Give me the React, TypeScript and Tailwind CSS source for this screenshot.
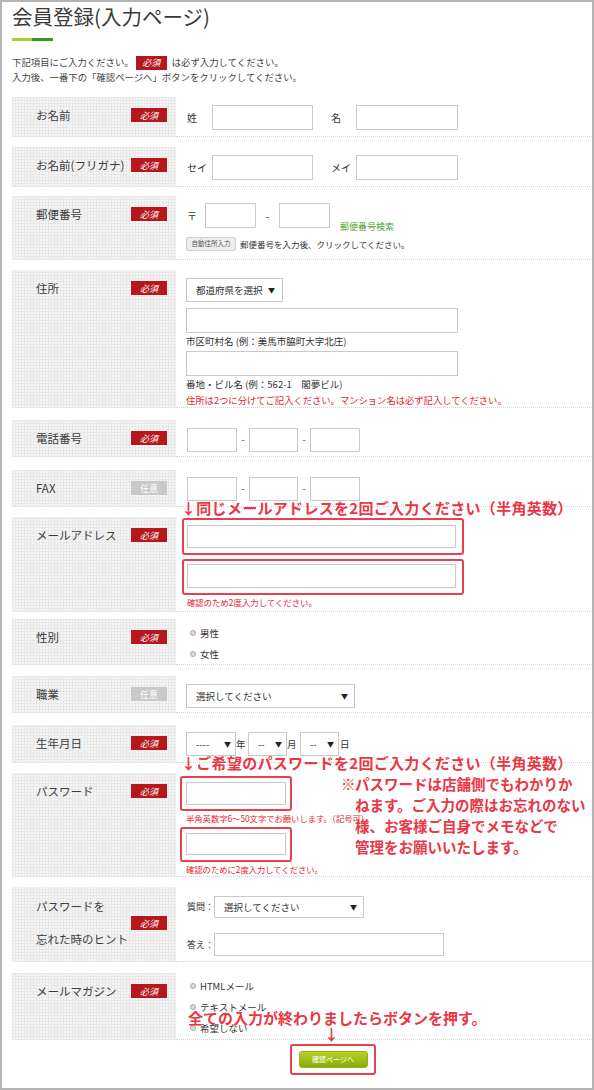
import React from "react";

const LABEL_BG =
  "bg-[#f6f6f6] bg-[image:repeating-linear-gradient(90deg,#e8e8e8_0px,#e8e8e8_1px,transparent_1px,transparent_3px),repeating-linear-gradient(0deg,#e8e8e8_0px,#e8e8e8_1px,transparent_1px,transparent_3px)]";

function Req() {
  return (
    <span className="inline-flex items-center justify-center w-[36px] h-[14px] bg-[#b5171c] text-white text-[9px] italic leading-none shrink-0">
      必須
    </span>
  );
}
function Opt() {
  return (
    <span className="inline-flex items-center justify-center w-[36px] h-[14px] bg-[#c9c9c9] text-white text-[9px] leading-none shrink-0">
      任意
    </span>
  );
}

function Box({ className }: { className: string }) {
  return <div className={`box-border border border-[#c9c9c9] bg-white shrink-0 ${className}`} />;
}

function Sel({ className, text }: { className: string; text: string }) {
  return (
    <div
      className={`box-border border border-[#c9c9c9] bg-white flex items-center justify-between shrink-0 ${className}`}
    >
      <span className="text-[9.5px] text-[#333] whitespace-nowrap">{text}</span>
      <span className="text-[7px] text-[#222] leading-none">▼</span>
    </div>
  );
}

function Radio({ label }: { label: string }) {
  return (
    <div className="flex items-center h-[16px]">
      <span className="w-[6px] h-[6px] rounded-full border border-[#a8a8a8] bg-[#dcdcdc]" />
      <span className="ml-[4px] text-[9.5px] text-[#333]">{label}</span>
    </div>
  );
}

function Row({
  label,
  opt,
  rowClass,
  contentClass,
  children,
}: {
  label: string;
  opt?: boolean;
  rowClass: string;
  contentClass: string;
  children?: React.ReactNode;
}) {
  return (
    <div className={`flex ${rowClass}`}>
      <div
        className={`w-[164px] shrink-0 flex items-start justify-between pl-[24px] pr-[9px] pt-[8px] ${LABEL_BG}`}
      >
        <span className="h-[20px] leading-[20px] text-[11.5px] text-[#3c3c3c] whitespace-nowrap">{label}</span>
        <span className="h-[20px] flex items-center">{opt ? <Opt /> : <Req />}</span>
      </div>
      <div className={`flex-1 relative border-b border-dotted border-[#d4d4d4] ${contentClass}`}>{children}</div>
    </div>
  );
}

export default function App() {
  return (
    <div className="w-[594px] h-[1090px] box-border border-2 border-[#b4b4b4] bg-white pl-[10px] overflow-hidden font-['Noto_Sans_CJK_JP','Noto_Sans',sans-serif] text-[#333]">
      <h1 className="pt-[2px] text-[20.5px] leading-[25px] text-[#3a3a3a] font-normal">会員登録(入力ページ)</h1>
      <div className="mt-[9px] flex h-[3px]">
        <div className="w-[20px] bg-[#a2d334]" />
        <div className="w-[21px] bg-[#389a17]" />
      </div>
      <div className="mt-[14px] text-[9.4px] leading-[15px] text-[#444]">
        <div className="flex items-center">
          下記項目にご入力ください。
          <span className="ml-[2px] mr-[5px] inline-flex items-center justify-center w-[31px] h-[14px] bg-[#b5171c] text-white text-[9px] italic leading-none">
            必須
          </span>
          は必ず入力してください。
        </div>
        <div>入力後、一番下の「確認ページへ」ボタンをクリックしてください。</div>
      </div>

      <div className="mt-[12px]">
        {/* お名前 */}
        <Row label="お名前" rowClass="h-[40px]" contentClass="pt-[8px] pl-[11px]">
          <div className="flex items-center text-[10px]">
            <span className="w-[25px]">姓</span>
            <Box className="w-[101px] h-[25px]" />
            <span className="ml-[18px] w-[25px]">名</span>
            <Box className="w-[102px] h-[25px]" />
          </div>
        </Row>

        {/* フリガナ */}
        <Row label="お名前(フリガナ)" rowClass="h-[40px] mt-[10px]" contentClass="pt-[8px] pl-[11px]">
          <div className="flex items-center text-[10px]">
            <span className="w-[25px]">セイ</span>
            <Box className="w-[101px] h-[25px]" />
            <span className="ml-[18px] w-[25px]">メイ</span>
            <Box className="w-[102px] h-[25px]" />
          </div>
        </Row>

        {/* 郵便番号 */}
        <Row label="郵便番号" rowClass="h-[64px] mt-[9px]" contentClass="pt-[7px] pl-[11px]">
          <div className="flex items-end h-[25px] text-[10px]">
            <span className="w-[18px] self-center">〒</span>
            <Box className="w-[51px] h-[25px]" />
            <span className="w-[23px] text-center self-center">-</span>
            <Box className="w-[51px] h-[25px]" />
            <span className="ml-[10px] text-[9px] leading-[12px] text-[#4f9f2a] -mb-[5px]">郵便番号検索</span>
          </div>
          <div className="mt-[9px] flex items-center">
            <span className="-ml-[1px] w-[50px] h-[14px] box-border border border-[#cfcfcf] bg-[#eeeeee] rounded-[2px] text-[6.5px] flex items-center justify-center text-[#555]">
              自動住所入力
            </span>
            <span className="ml-[4px] text-[8.5px] text-[#333]">郵便番号を入力後、クリックしてください。</span>
          </div>
        </Row>

        {/* 住所 */}
        <Row label="住所" rowClass="h-[138px] mt-[10px]" contentClass="pt-[8px] pl-[10px]">
          <Sel className="w-[97px] h-[24px] pl-[9px] pr-[7px]" text="都道府県を選択" />
          <Box className="mt-[6px] w-[272px] h-[25px]" />
          <div className="text-[9.5px] leading-[16px]">市区町村名 (例：美馬市脇町大字北庄)</div>
          <Box className="mt-[2px] w-[272px] h-[25px]" />
          <div className="text-[9.5px] leading-[16px]">番地・ビル名 (例：562-1　閣夢ビル)</div>
          <div className="text-[9.3px] leading-[16px] text-[#e8242f]">
            住所は2つに分けてご記入ください。マンション名は必ず記入してください。
          </div>
        </Row>

        {/* 電話番号 */}
        <Row label="電話番号" rowClass="h-[37px] mt-[12px]" contentClass="pt-[8px] pl-[11px]">
          <div className="flex items-center text-[9px]">
            <Box className="w-[50px] h-[24px]" />
            <span className="w-[12px] text-center">-</span>
            <Box className="w-[49px] h-[24px]" />
            <span className="w-[12px] text-center">-</span>
            <Box className="w-[50px] h-[24px]" />
          </div>
        </Row>

        {/* FAX */}
        <Row label="FAX" opt rowClass="h-[37px] mt-[13px]" contentClass="pt-[7px] pl-[11px]">
          <div className="flex items-center text-[9px]">
            <Box className="w-[50px] h-[24px]" />
            <span className="w-[12px] text-center">-</span>
            <Box className="w-[49px] h-[24px]" />
            <span className="w-[12px] text-center">-</span>
            <Box className="w-[50px] h-[24px]" />
          </div>
        </Row>

        {/* メールアドレス */}
        <Row label="メールアドレス" rowClass="h-[95px] mt-[10px]" contentClass="pt-[1px] pl-[6px]">
          <div className="absolute left-[5px] top-[-17px] text-[15px] leading-[16px] font-bold tracking-[0.3px] text-[#ea3645] whitespace-nowrap">
            ↓同じメールアドレスを2回ご入力ください（半角英数）
          </div>
          <div className="w-[282px] h-[37px] box-border border-2 border-[#e8404f] rounded-[3px] pl-[3px] pt-[5px]">
            <Box className="w-[269px] h-[23px]" />
          </div>
          <div className="mt-[4px] w-[282px] h-[36px] box-border border-2 border-[#e8404f] rounded-[3px] pl-[3px] pt-[3px]">
            <Box className="w-[269px] h-[24px]" />
          </div>
          <div className="ml-[5px] text-[8.4px] leading-[14px] text-[#e8242f]">確認のため2度入力してください。</div>
        </Row>

        {/* 性別 */}
        <Row label="性別" rowClass="h-[46px] mt-[7px]" contentClass="pt-[6px] pl-[14px]">
          <div className="flex flex-col gap-[5px]">
            <Radio label="男性" />
            <Radio label="女性" />
          </div>
        </Row>

        {/* 職業 */}
        <Row label="職業" opt rowClass="h-[37px] mt-[11px]" contentClass="pt-[8px] pl-[10px]">
          <Sel className="w-[169px] h-[24px] pl-[9px] pr-[6px]" text="選択してください" />
        </Row>

        {/* 生年月日 */}
        <Row label="生年月日" rowClass="h-[38px] mt-[12px]" contentClass="pt-[7px] pl-[10px]">
          <div className="flex items-center text-[9.5px]">
            <Sel className="w-[50px] h-[24px] pl-[9px] pr-[4px]" text="----" />
            <span className="w-[12px]">年</span>
            <Sel className="w-[39px] h-[24px] pl-[9px] pr-[4px]" text="--" />
            <span className="w-[13px]">月</span>
            <Sel className="w-[39px] h-[24px] pl-[9px] pr-[4px]" text="--" />
            <span className="ml-[1px]">日</span>
          </div>
        </Row>

        {/* パスワード */}
        <Row label="パスワード" rowClass="h-[104px] mt-[10px]" contentClass="pl-[4px] pt-[3px] flex items-start">
          <div className="absolute left-[5px] top-[-18px] text-[15px] leading-[16px] font-bold tracking-[0.3px] text-[#ea3645] whitespace-nowrap">
            ↓ご希望のパスワードを2回ご入力ください（半角英数）
          </div>
          <div className="w-[112px] shrink-0">
            <div className="w-[112px] h-[35px] box-border border-2 border-[#e8404f] rounded-[3px] pl-[4px] pt-[4px]">
              <Box className="w-[100px] h-[23px]" />
            </div>
            <div className="ml-[6px] text-[8.3px] leading-[14px] text-[#e8242f] whitespace-nowrap">
              半角英数字6～50文字でお願いします。（記号可）
            </div>
            <div className="relative mt-[2px] w-[112px] h-[35px] box-border border-2 border-[#e8404f] rounded-[3px] pl-[4px] pt-[4px] bg-white">
              <Box className="w-[100px] h-[22px]" />
            </div>
            <div className="ml-[6px] text-[8.3px] leading-[14px] text-[#e8242f] whitespace-nowrap">
              確認のために2度入力してください。
            </div>
          </div>
          <div className="ml-[49px] -mt-[3px] flex text-[14.5px] leading-[21px] font-bold text-[#ea3645] whitespace-nowrap">
            <span className="w-[14px]">※</span>
            <div>
              パスワードは店舗側でもわかりか
              <br />
              ねます。ご入力の際はお忘れのない
              <br />
              様、お客様ご自身でメモなどで
              <br />
              管理をお願いいたします。
            </div>
          </div>
        </Row>

        {/* ヒント */}
        <div className="flex h-[75px] mt-[10px]">
          <div className={`w-[164px] shrink-0 flex items-start justify-between pl-[24px] pr-[9px] pt-[3px] ${LABEL_BG}`}>
            <span className="leading-[33px] text-[11.5px] text-[#3c3c3c] whitespace-nowrap">
              パスワードを
              <br />
              忘れた時のヒント
            </span>
            <span className="mt-[26px] flex">
              <Req />
            </span>
          </div>
          <div className="flex-1 relative border-b border-dotted border-[#d4d4d4] pt-[9px] pl-[11px]">
            <div className="flex items-center text-[9px]">
              <span className="w-[27px] whitespace-nowrap">質問：</span>
              <Sel className="w-[150px] h-[22px] pl-[9px] pr-[6px]" text="選択してください" />
            </div>
            <div className="mt-[15px] flex items-center text-[9px]">
              <span className="w-[27px] whitespace-nowrap">答え：</span>
              <Box className="w-[230px] h-[23px]" />
            </div>
          </div>
        </div>

        {/* メールマガジン */}
        <Row label="メールマガジン" rowClass="h-[67px] mt-[11px]" contentClass="pt-[5px] pl-[14px]">
          <div className="flex flex-col gap-[5px]">
            <Radio label="HTMLメール" />
            <Radio label="テキストメール" />
            <Radio label="希望しない" />
          </div>
          <div className="absolute left-[12px] top-[36px] text-[15px] leading-[18px] font-bold text-[#ea3645] whitespace-nowrap">
            全ての入力が終わりましたらボタンを押す。
          </div>
          <div className="absolute left-[148px] top-[52px] text-[15px] leading-[18px] font-bold text-[#ea3645]">↓</div>
        </Row>

        <div className="mt-[4px] ml-[278px] w-[86px] h-[31px] box-border border-2 border-[#e8404f] rounded-[3px] flex items-center justify-center">
          <div className="w-[69px] h-[17px] rounded-[3px] bg-[linear-gradient(#b7d228,#8aab0b)] border border-[#93b213] flex items-center justify-center text-white text-[7px]">
            確認ページへ
          </div>
        </div>
      </div>
    </div>
  );
}
